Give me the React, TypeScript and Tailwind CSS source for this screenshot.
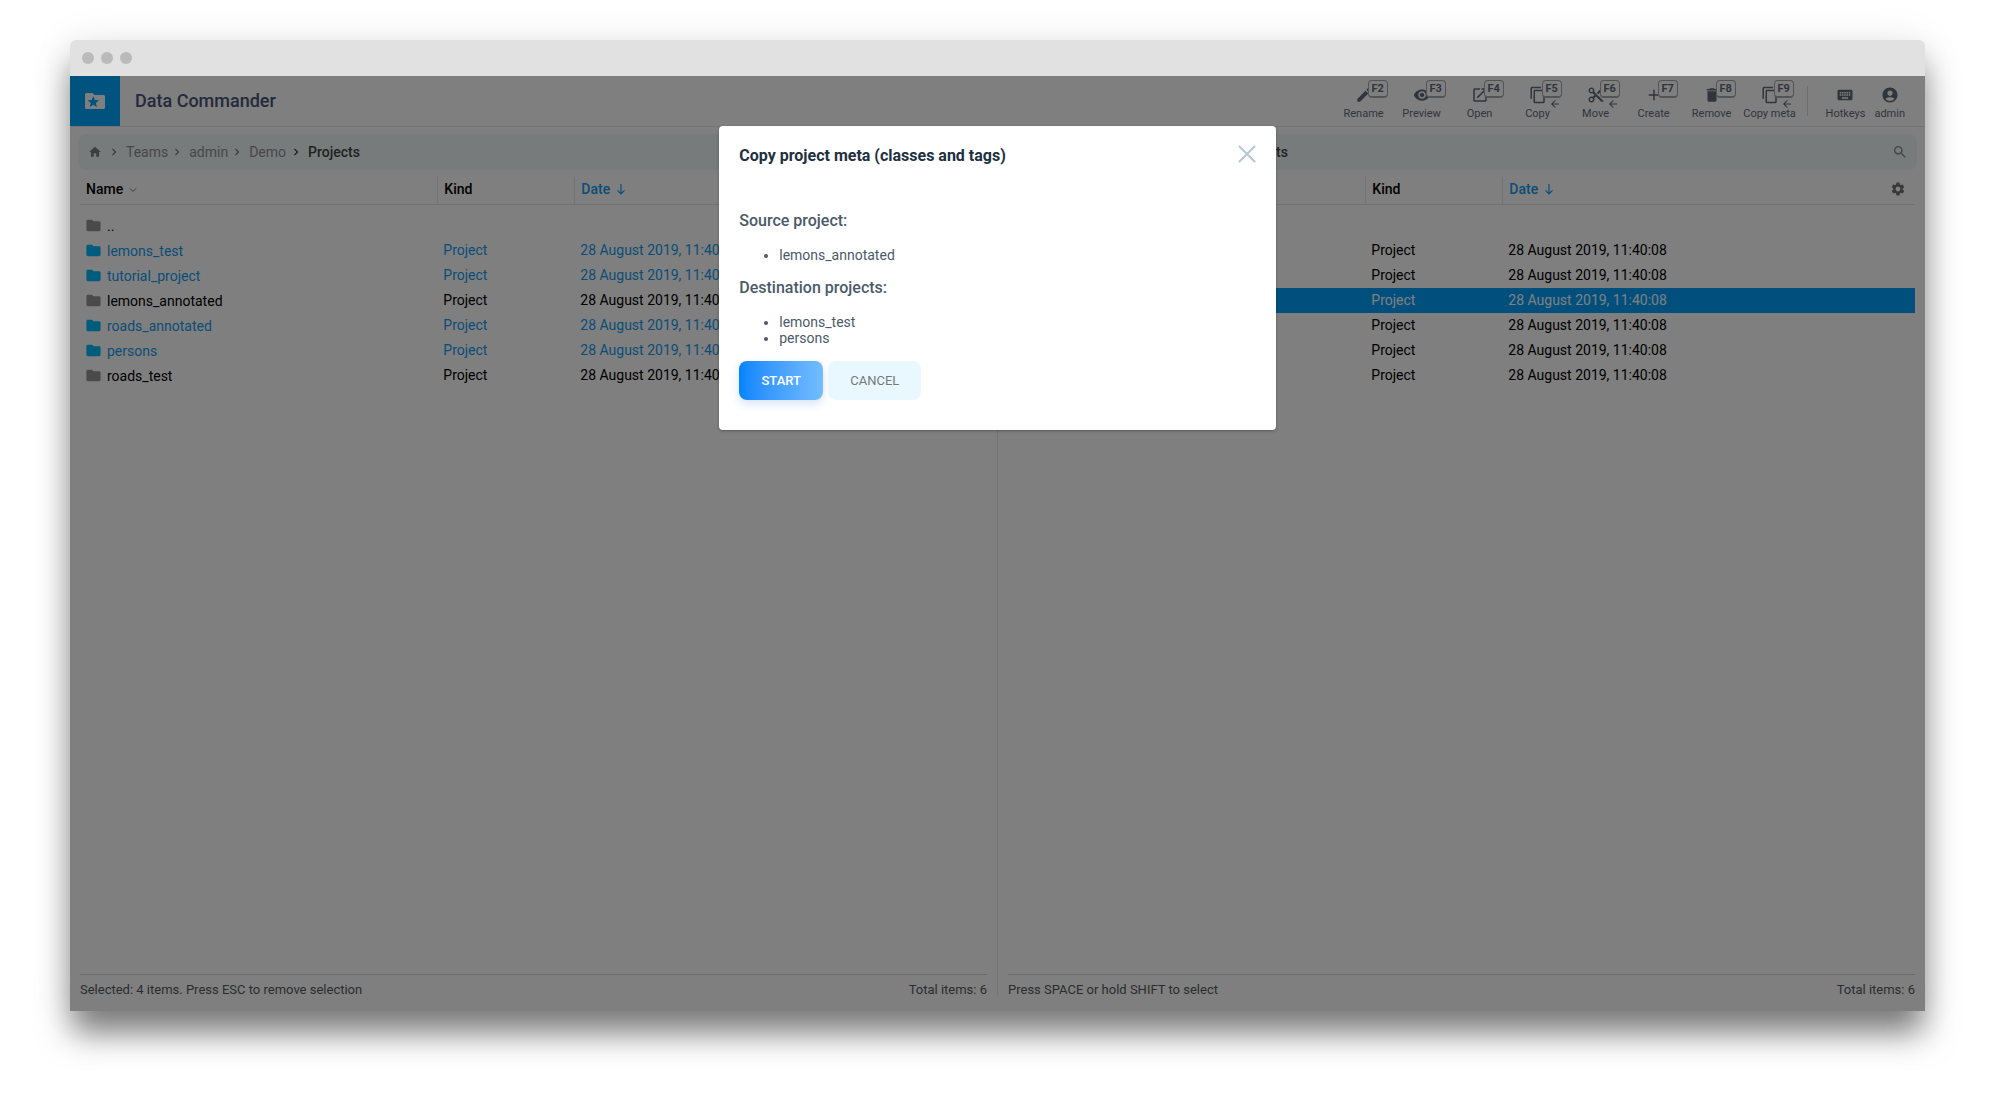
import React from "react";
import type { ReactNode } from "react";
import type { IconType } from "react-icons";
import {
  MdAccountCircle,
  MdAdd,
  MdArrowBack,
  MdChevronRight,
  MdContentCopy,
  MdContentCut,
  MdDelete,
  MdEdit,
  MdFolder,
  MdHome,
  MdKeyboard,
  MdOpenInNew,
  MdSearch,
  MdSettings,
  MdVisibility,
} from "react-icons/md";

type Action = { label: string; hotkey: string; Icon: IconType; toLeft?: boolean };

const actions: Action[] = [
  { label: "Rename", hotkey: "F2", Icon: MdEdit },
  { label: "Preview", hotkey: "F3", Icon: MdVisibility },
  { label: "Open", hotkey: "F4", Icon: MdOpenInNew },
  { label: "Copy", hotkey: "F5", Icon: MdContentCopy, toLeft: true },
  { label: "Move", hotkey: "F6", Icon: MdContentCut, toLeft: true },
  { label: "Create", hotkey: "F7", Icon: MdAdd },
  { label: "Remove", hotkey: "F8", Icon: MdDelete },
  { label: "Copy meta", hotkey: "F9", Icon: MdContentCopy, toLeft: true },
];

const names = [
  "lemons_test",
  "tutorial_project",
  "lemons_annotated",
  "roads_annotated",
  "persons",
  "roads_test",
];

function LogoIcon() {
  return (
    <svg viewBox="0 0 24 24" className="size-6" aria-hidden="true">
      <path
        fill="#fff"
        fillRule="evenodd"
        d="M3.5 4H9.5L11.5 6H20.5A1.5 1.5 0 0 1 22 7.500V18.500A1.5 1.5 0 0 1 20.500 20H3.500A1.500 1.500 0 0 1 2 18.500V5.500A1.500 1.500 0 0 1 3.500 4ZM10.300 7.200L8.700 11L4.600 11.300L7.700 14L6.700 18L10.300 15.800L13.900 18L12.900 14L16 11.300L11.900 11Z"
      />
    </svg>
  );
}

function ToolButton({ label, hotkey, Icon, toLeft }: Action) {
  return (
    <button type="button" className="relative flex w-[58px] flex-col items-center pt-[10px]">
      <Icon className="size-[18px]" />
      <span className="pt-px text-[11px] leading-[18px] whitespace-nowrap">{label}</span>
      <kbd className="absolute top-1 left-[33px] flex h-[18px] w-5 items-center justify-center rounded border border-b-2 border-[#a5a8ac] bg-white font-[Roboto] text-[11px] leading-none font-bold">
        {hotkey}
      </kbd>
      {toLeft && <MdArrowBack className="absolute top-[22px] left-10 size-3" />}
    </button>
  );
}

function UserButton({ label, Icon }: { label: string; Icon: IconType }) {
  return (
    <button type="button" className="flex flex-col items-center pt-[10px]">
      <Icon className="size-[18px]" />
      <span className="pt-px text-[11px] leading-[18px]">{label}</span>
    </button>
  );
}

function Header() {
  return (
    <header className="flex h-[51px] items-start border-b border-[#eaeaea]">
      <div className="flex size-[50px] items-center justify-center bg-[#00a5ff]">
        <LogoIcon />
      </div>
      <h1 className="ml-[15px] text-lg leading-[50px] font-medium text-[#475577]">Data Commander</h1>
      <nav aria-label="Actions" className="ml-auto flex text-[#5f6b78]">
        {actions.map((a) => (
          <ToolButton key={a.label} {...a} />
        ))}
        <div className="mt-[10px] mr-[18px] ml-2 h-[30px] border-l border-[#dcdcdc]" />
        <div className="mr-5 flex gap-[9px]">
          <UserButton label="Hotkeys" Icon={MdKeyboard} />
          <UserButton label="admin" Icon={MdAccountCircle} />
        </div>
      </nav>
    </header>
  );
}

function Breadcrumbs() {
  return (
    <div className="mx-2 flex h-9 items-center rounded-lg bg-[#eef7f8] pr-[9px] pl-[10px] text-sm text-[#8f8f8f]">
      <a href="#home" aria-label="Home">
        <MdHome className="size-[14px] text-[#7d7d7d]" />
      </a>
      <MdChevronRight className="mr-[5px] ml-[5px] size-[14px] text-[#6f6f6f]" />
      {["Teams", "admin", "Demo"].map((part) => (
        <React.Fragment key={part}>
          <a href={"#" + part}>{part}</a>
          <MdChevronRight
            className={part === "Demo" ? "mr-[5px] ml-[3px] size-[14px] text-[#333]" : "mr-[5px] ml-[2px] size-[14px] text-[#6f6f6f]"}
          />
        </React.Fragment>
      ))}
      <a href="#Projects" className="font-medium text-[#444]">
        Projects
      </a>
      <button type="button" aria-label="Search" className="ml-auto">
        <MdSearch className="size-4 text-[#8a8a8a]" />
      </button>
    </div>
  );
}

function HeadCell({ children, divided }: { children: ReactNode; divided?: boolean }) {
  return (
    <div className={divided ? "flex h-[27px] items-center border-l border-[#e8e8e8] pb-[3px] pl-1.5" : "flex h-[27px] items-center pb-[3px] pl-1.5"}>
      {children}
    </div>
  );
}

function Panel({ selected, cursor, status, last }: { selected: string[]; cursor?: string; status: string; last?: boolean }) {
  return (
    <section className={last ? "flex flex-1 flex-col pt-[7px]" : "flex flex-1 flex-col border-r border-[#e6e6e6] pt-[7px]"}>
      <Breadcrumbs />
      <div className="mx-[10px] mt-[7px] flex-1">
        <table className="w-full table-fixed text-sm leading-[25px]">
          <thead className="text-left text-black">
            <tr className="border-b border-[#e4e4e4]">
              <th className="w-[39.4%] p-0 font-medium">
                <HeadCell>
                  Name
                  <svg viewBox="0 0 8 8" className="mt-px ml-1.5 size-2" fill="none" stroke="#777" aria-hidden="true">
                    <path d="M1 2.500L4 5.500L7 2.500" />
                  </svg>
                </HeadCell>
              </th>
              <th className="w-[15.1%] p-0 font-medium">
                <HeadCell divided>Kind</HeadCell>
              </th>
              <th className="p-0 font-medium text-[#149aee]">
                <HeadCell divided>
                  Date
                  <svg viewBox="0 0 10 12" className="ml-1.5 h-3 w-[10px]" fill="none" stroke="currentColor" strokeWidth="1.200" aria-hidden="true">
                    <path d="M5 1V10.500M1.500 7.300L5 10.800L8.500 7.300" />
                  </svg>
                  <button type="button" aria-label="Table settings" className="mr-[9px] ml-auto text-[#707070]">
                    <MdSettings className="size-4" />
                  </button>
                </HeadCell>
              </th>
            </tr>
          </thead>
          <tbody>
            <tr className="h-2" aria-hidden="true">
              <td colSpan={3} className="p-0" />
            </tr>
            {["..", ...names].map((name) => {
              const isSelected = selected.includes(name);
              const tone = name === cursor ? "bg-[#009ffa] text-white" : isSelected ? "text-[#149aee]" : "text-black";
              return (
                <tr key={name} className={tone}>
                  <td className="p-0 pl-[5px]">
                    <div className="flex h-[25px] items-center gap-[5px]">
                      <MdFolder className={isSelected ? "size-[17px] text-[#00b8fa]" : "size-[17px] text-[#959595]"} />
                      <span className="pt-[2px]">{name}</span>
                    </div>
                  </td>
                  <td className="p-0 pl-1.5">{name === ".." ? "" : "Project"}</td>
                  <td className="p-0 pl-1.5">{name === ".." ? "" : "28 August 2019, 11:40:08"}</td>
                </tr>
              );
            })}
          </tbody>
        </table>
      </div>
      <footer className="mx-[10px] flex h-[22px] justify-between border-t border-[#d8d8d8] pt-[7px] text-[13px] leading-4 text-[#56595d]">
        <span>{status}</span>
        <span>Total items: 6</span>
      </footer>
    </section>
  );
}

function CopyMetaDialog() {
  return (
    <div role="dialog" aria-labelledby="dialog-title" className="w-[30%] rounded-sm bg-white px-5 pb-[30px] text-[#4b5a68] shadow-[0_1px_3px_rgba(0,0,0,0.3)]">
      <div className="flex items-start justify-between pt-[18px]">
        <h2 id="dialog-title" className="text-base leading-6 font-bold text-[#20303f]">
          Copy project meta (classes and tags)
        </h2>
        <button type="button" aria-label="Close" className="pt-px">
          <svg viewBox="0 0 18 18" className="size-[18px]" fill="none" stroke="#b7c6d8" strokeWidth="2" strokeLinecap="round" aria-hidden="true">
            <path d="M1.500 1.500L16.500 16.500M16.500 1.500L1.500 16.500" />
          </svg>
        </button>
      </div>
      <h3 className="mt-[41px] text-base leading-6 font-medium">Source project:</h3>
      <ul className="mt-[14px] list-disc pl-10 text-sm leading-4">
        <li>lemons_annotated</li>
      </ul>
      <h3 className="mt-[13px] text-base leading-6 font-medium">Destination projects:</h3>
      <ul className="mt-[14px] list-disc pl-10 text-sm leading-4">
        <li>lemons_test</li>
        <li>persons</li>
      </ul>
      <div className="mt-[15px] flex gap-[5px] text-[13px]">
        <button
          type="button"
          className="h-[39px] w-[84px] rounded-lg bg-linear-to-r from-[#0084ff] to-[#72bdff] font-medium text-white shadow-[0_4px_10px_rgba(60,110,220,0.2)]"
        >
          START
        </button>
        <button type="button" className="h-[39px] w-[93px] rounded-lg bg-[#e9f8ff] text-[#74797d]">
          CANCEL
        </button>
      </div>
    </div>
  );
}

export default function App() {
  return (
    <div className="flex min-h-screen flex-col bg-white px-[70px] pt-10 pb-[100px] font-[Roboto,sans-serif]">
      <div className="flex flex-1 flex-col rounded-t-md shadow-[0_0_40px_rgba(0,0,0,0.08),0_24px_32px_-2px_rgba(0,0,0,0.5)]">
        <div className="flex h-9 items-center gap-[7px] rounded-t-md bg-[#e1e1e1] pl-3">
          <span className="size-3 rounded-full bg-[#bababa]" />
          <span className="size-3 rounded-full bg-[#bababa]" />
          <span className="size-3 rounded-full bg-[#bababa]" />
        </div>
        <div className="relative flex flex-1 flex-col bg-white">
          <Header />
          <main className="mb-[15px] flex flex-1">
            <Panel
              selected={["lemons_test", "tutorial_project", "roads_annotated", "persons"]}
              status="Selected: 4 items. Press ESC to remove selection"
            />
            <Panel selected={[]} cursor="lemons_annotated" status="Press SPACE or hold SHIFT to select" last />
          </main>
          <div className="absolute inset-0 flex items-start justify-center bg-black/50 pt-[50px]">
            <CopyMetaDialog />
          </div>
        </div>
      </div>
    </div>
  );
}
